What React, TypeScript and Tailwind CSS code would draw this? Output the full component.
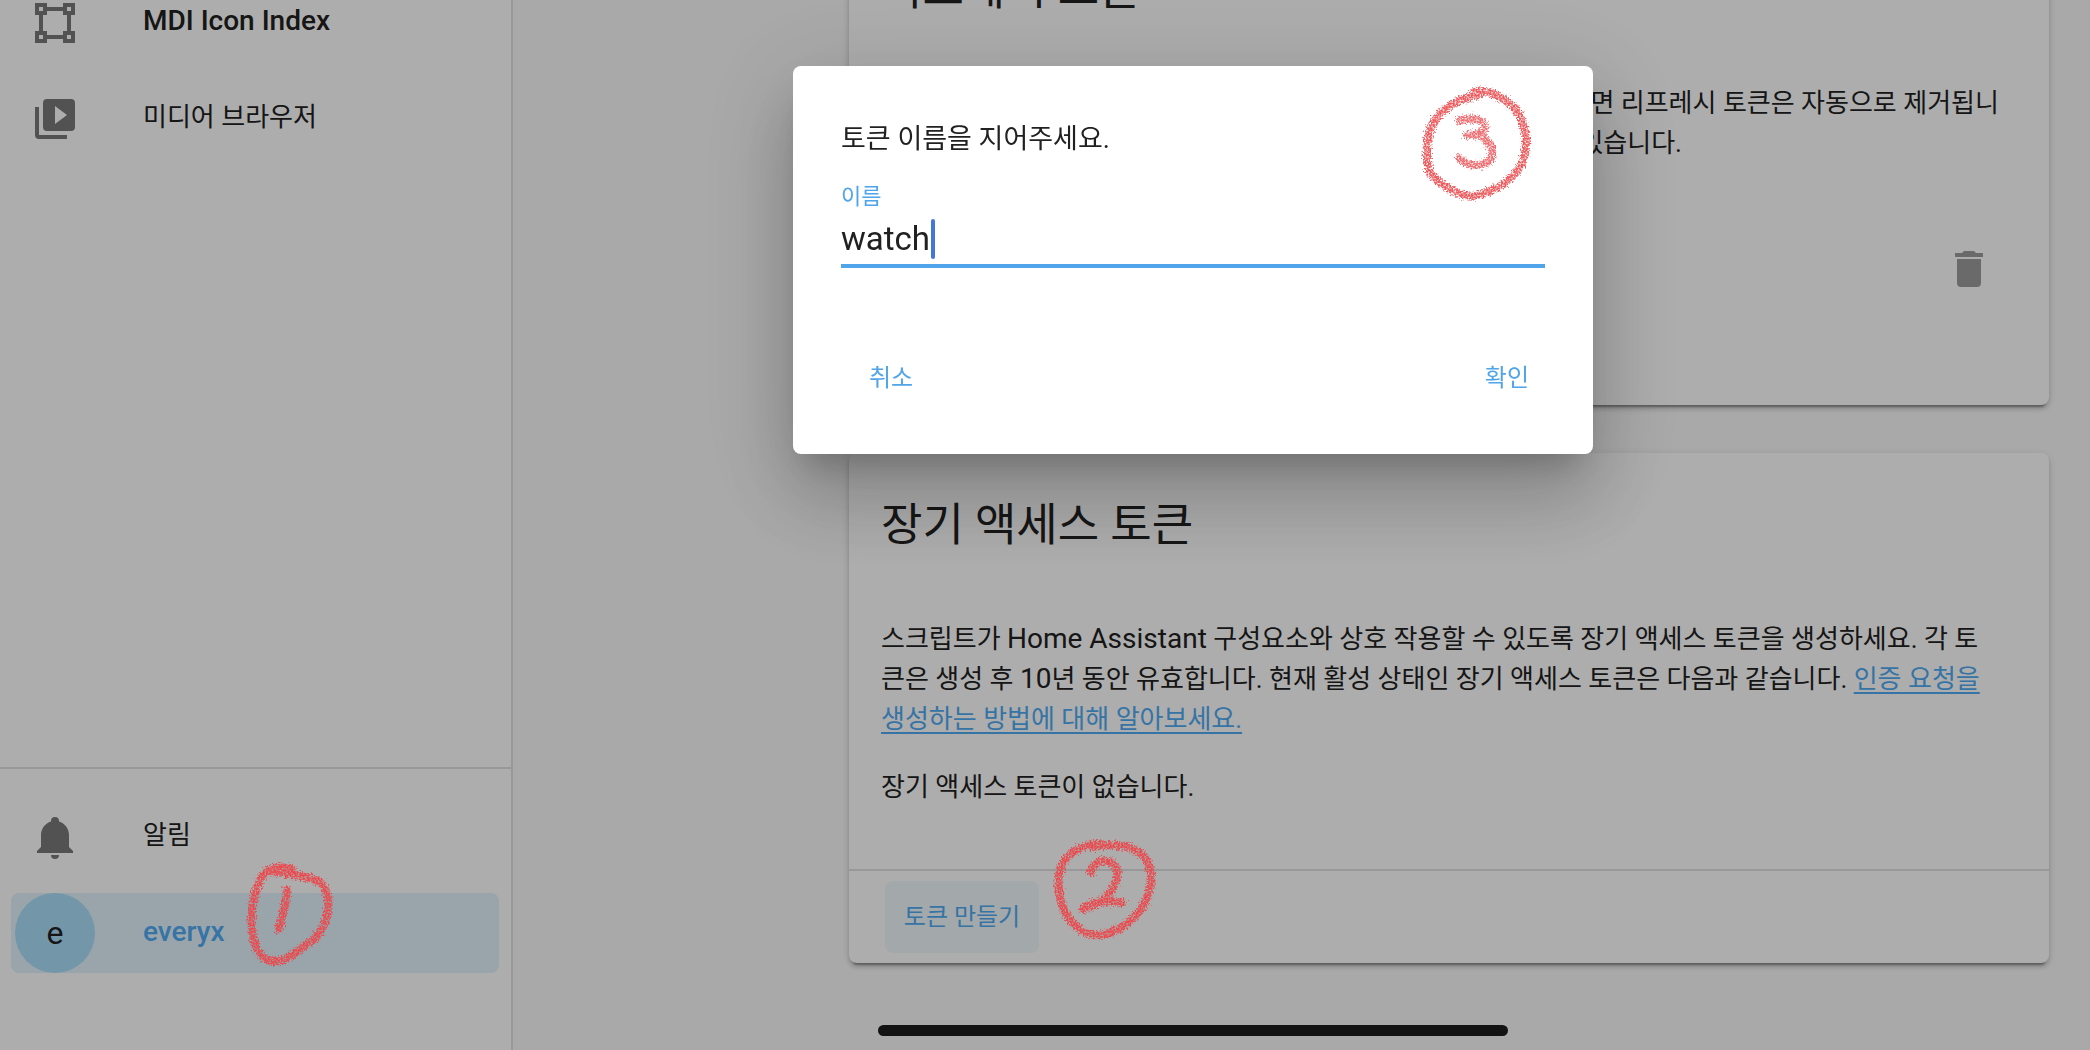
import { useState } from "react"
import type { ReactNode } from "react"

const icons = {
    vectorSquare: "M2,2H8V4H16V2H22V8H20V16H22V22H16V20H8V22H2V16H4V8H2V2M16,8V6H8V8H6V16H8V18H16V16H18V8H16M4,4V6H6V4H4M18,4V6H20V4H18M4,18V20H6V18H4M18,18V20H20V18H18Z",
    mediaBrowser: "M4,6H2V20A2,2 0 0,0 4,22H18V20H4V6M20,2A2,2 0 0,1 22,4V16A2,2 0 0,1 20,18H8A2,2 0 0,1 6,16V4A2,2 0 0,1 8,2H20M12,5.5V14.5L18,10L12,5.5Z",
    bell: "M21,19V20H3V19L5,17V11C5,7.9 7.03,5.17 10,4.29C10,4.19 10,4.1 10,4A2,2 0 0,1 12,2A2,2 0 0,1 14,4C14,4.1 14,4.19 14,4.29C16.97,5.17 19,7.9 19,11V17L21,19M14,21A2,2 0 0,1 12,23A2,2 0 0,1 10,21",
    trash: "M19,4H15.5L14.5,3H9.5L8.5,4H5V6H19M6,19A2,2 0 0,0 8,21H16A2,2 0 0,0 18,19V7H6V19Z",
}

function Icon({ path }: { path: string }) {
    return (
        <svg viewBox="0 0 24 24" className="size-12 shrink-0" fill="currentColor" fillRule="evenodd" aria-hidden="true">
            <path d={path} />
        </svg>
    )
}

function SidebarItem({ icon, children }: { icon: string; children: ReactNode }) {
    return (
        <a href="#" className="ml-[11px] mr-3 flex h-20 items-center gap-16 rounded-lg px-5 text-[#212121]">
            <span className="text-[#7a7a7a]">
                <Icon path={icon} />
            </span>
            <span className="pb-1">{children}</span>
        </a>
    )
}

function Sidebar() {
    return (
        <aside className="flex h-full w-[513px] shrink-0 flex-col border-r-2 border-[#e0e0e0] bg-white">
            {/* the list is scrolled, so the first row is cut off at the top */}
            <nav className="-mt-[17px] flex flex-1 flex-col gap-4">
                <SidebarItem icon={icons.vectorSquare}>
                    <span className="text-[28px] font-medium">MDI Icon Index</span>
                </SidebarItem>
                <SidebarItem icon={icons.mediaBrowser}>미디어 브라우저</SidebarItem>
            </nav>
            <div className="flex flex-col gap-4 border-t-2 border-[#e0e0e0] pt-7 pb-[77px]">
                <SidebarItem icon={icons.bell}>알림</SidebarItem>
                <a href="#" className="ml-[11px] mr-3 flex h-20 items-center gap-12 rounded-lg bg-[#e2f3fc] px-1 text-[28px] font-medium text-[#50abf3]">
                    <span className="flex size-20 items-center justify-center rounded-full bg-[#abddfa] text-[32px] font-normal text-[#212121]">e</span>
                    <span className="pb-0.5">everyx</span>
                </a>
            </div>
        </aside>
    )
}

function Card({ title, children }: { title: string; children: ReactNode }) {
    return (
        <section className="rounded-lg bg-white shadow-[0_4px_4px_0_rgba(0,0,0,0.14),0_2px_10px_0_rgba(0,0,0,0.12),0_6px_2px_-4px_rgba(0,0,0,0.3)]">
            <h2 className="px-8 pt-[25px] pb-[17px] text-[45px] leading-[96px]">{title}</h2>
            {children}
        </section>
    )
}

function Profile() {
    return (
        <main className="flex-1 overflow-hidden">
            <div className="-mt-[83px] mr-[41px] ml-auto flex max-w-[1200px] flex-col gap-12">
                <Card title="리프레시 토큰">
                    <div className="px-8 pb-[58px]">
                        <p className="my-7 whitespace-nowrap">
                            각 리프레시 토큰은, 로그인 세션을 나타냅니다. 로그아웃을 클릭 하면 리프레시 토큰은 자동으로 제거됩니
                            <br />
                            다. 현재, 사용자 계정에 다음 활성화 된 리프레시 토큰이 등록되어 있습니다.
                        </p>
                        <div className="flex h-[156px] items-center justify-end">
                            <button type="button" aria-label="삭제" className="flex size-24 items-center justify-center text-[#9d9d9d]">
                                <Icon path={icons.trash} />
                            </button>
                        </div>
                    </div>
                </Card>
                <Card title="장기 액세스 토큰">
                    <div className="px-8 pb-[34px]">
                        <p className="my-7 whitespace-nowrap">
                            스크립트가 <span className="text-[28px]">Home Assistant</span> 구성요소와 상호 작용할 수 있도록 장기 액세스 토큰을 생성하세요. 각 토
                            <br />
                            큰은 생성 후 <span className="text-[28px]">10</span>년 동안 유효합니다. 현재 활성 상태인 장기 액세스 토큰은 다음과 같습니다.{" "}
                            <a href="#" className="text-[#50abf3] underline decoration-2 underline-offset-4">
                                인증 요청을
                                <br />
                                생성하는 방법에 대해 알아보세요.
                            </a>
                        </p>
                        <p className="my-7">장기 액세스 토큰이 없습니다.</p>
                    </div>
                    <div className="border-t-2 border-[#e0e0e0] px-9 py-2.5">
                        <button type="button" className="h-[72px] min-w-[154px] rounded-lg bg-[#f0f8fb] px-4 text-2xl text-[#50abf3]">
                            토큰 만들기
                        </button>
                    </div>
                </Card>
            </div>
        </main>
    )
}

function TokenDialog() {
    const [name, setName] = useState("watch")

    return (
        <div className="fixed inset-0 flex items-start justify-end bg-black/32 pt-[66px] pr-[497px]">
            <div
                role="dialog"
                aria-modal="true"
                className="w-[800px] rounded-lg bg-white pt-[53px] pb-10 shadow-[0_22px_30px_-14px_rgba(0,0,0,0.2),0_48px_76px_6px_rgba(0,0,0,0.14),0_18px_92px_16px_rgba(0,0,0,0.12)]"
            >
                <div className="px-12">
                    <p className="text-[27px]">토큰 이름을 지어주세요.</p>
                    <label htmlFor="token-name" className="mt-[26px] block text-[22px] leading-6 text-[#50a5ea]">이름</label>
                    <div className="relative mt-2.5 border-b-4 border-[#50a5ea] pb-[5px]">
                        <input
                            id="token-name"
                            value={name}
                            onChange={(e) => setName(e.target.value)}
                            className="block h-10 w-full text-[33px] outline-none"
                        />
                        <span className="absolute top-0 left-[90px] h-10 w-1 rounded-sm bg-[#4478d8]" />
                    </div>
                </div>
                <div className="mt-[74px] flex justify-between pr-12 pl-[60px] text-2xl text-[#50a5ea]">
                    <button type="button" className="h-[72px] px-4">취소</button>
                    <button type="button" className="h-[72px] px-4">확인</button>
                </div>
            </div>
        </div>
    )
}

// red crayon marks for the three steps
function CrayonMarks() {
    return (
        <svg
            className="pointer-events-none fixed top-0 left-0 h-[1050px] w-[2090px]"
            viewBox="0 0 2090 1050"
            fill="none"
            stroke="#ea4a4e"
            strokeLinecap="round"
            strokeLinejoin="round"
            aria-hidden="true"
        >
            <filter id="crayon" x="0" y="0" width="2090" height="1050" filterUnits="userSpaceOnUse" colorInterpolationFilters="sRGB">
                <feTurbulence type="fractalNoise" baseFrequency="0.6" numOctaves="2" seed="4" result="noise" />
                <feDisplacementMap in="SourceGraphic" in2="noise" scale="9" xChannelSelector="R" yChannelSelector="G" result="rough" />
                <feGaussianBlur in="rough" stdDeviation="0.6" result="soft" />
                <feColorMatrix in="noise" type="matrix" values="0 0 0 0 0  0 0 0 0 0  0 0 0 0 0  0 0 2.4 0 -0.4" result="grain" />
                <feComposite in="soft" in2="grain" operator="in" />
            </filter>
            <g filter="url(#crayon)" strokeWidth="8">
                <path d="M292 869C277 863 265 869 259 882C252 901 249 923 254 941C258 955 265 962 277 961C291 959 301 947 313 940C324 930 330 914 328 899C326 885 320 880 309 878C297 875 284 873 270 871" />
                <path d="M287 890C286 904 282 918 279 929" />
                <path d="M1100 844C1076 844 1062 857 1059 875C1057 896 1063 913 1074 924C1081 932 1091 936 1100 935C1128 931 1148 908 1151 882C1153 859 1138 847 1121 846C1110 844 1101 845 1093 847" />
                <path d="M1091 872C1092 862 1104 858 1112 863C1122 870 1116 883 1111 891C1106 899 1096 906 1083 909C1092 901 1109 900 1122 903" />
                <path opacity="0.9" d="M1479 95C1454 98 1430 116 1428 140C1426 155 1426 166 1431 174C1440 184 1457 196 1473 196C1493 193 1515 180 1523 161C1530 140 1524 115 1510 104C1499 95 1487 89 1474 92" />
                <path opacity="0.8" d="M1459 121C1470 117 1480 118 1484 124C1487 132 1476 135 1467 135C1484 132 1494 146 1492 156C1488 168 1467 167 1459 158" />
            </g>
        </svg>
    )
}

export default function App() {
    return (
        <div className="relative flex h-screen overflow-hidden bg-[#fafafa] font-[Roboto,'Noto_Sans_CJK_KR',sans-serif] text-[26px] leading-10 text-[#212121]">
            <Sidebar />
            <Profile />
            <TokenDialog />
            <CrayonMarks />
            {/* home indicator */}
            <div className="fixed bottom-3.5 left-[42%] h-[11px] w-[630px] rounded-full bg-[#131313]" />
        </div>
    )
}
